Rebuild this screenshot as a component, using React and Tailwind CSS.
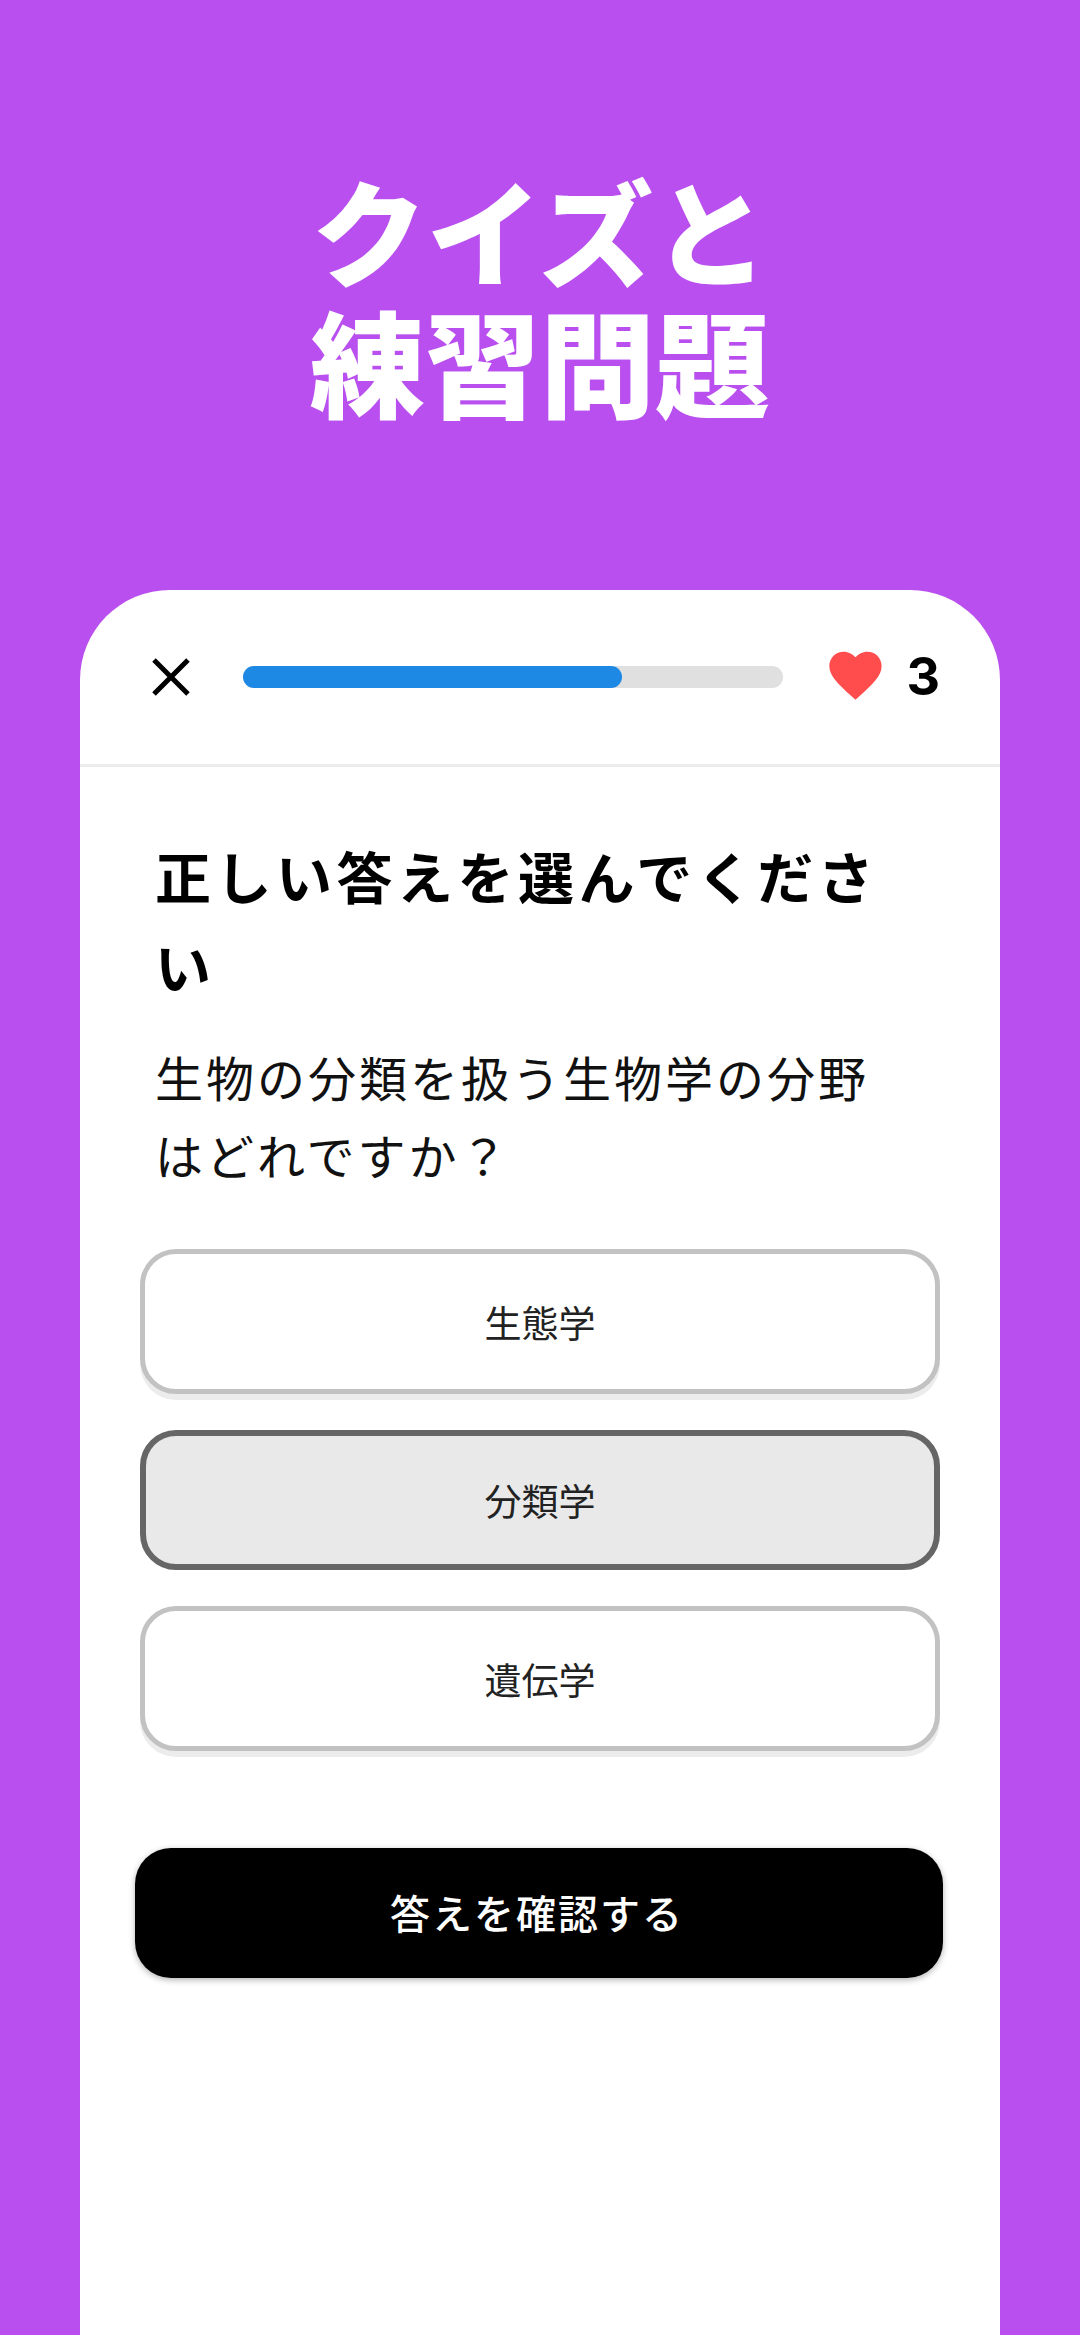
const jp = { fontFamily: '"Noto Sans CJK JP", "Noto Sans", sans-serif' };

function Option({ label, selected }) {
  return (
    <div
      className={
        selected
          ? "flex h-[140px] items-center justify-center rounded-[36px] border-[6px] border-[#666666] bg-[#e9e9e9] pt-[2px] text-[37px] text-[#222222]"
          : "flex h-[145px] items-center justify-center rounded-[36px] border-[5px] border-[#c2c2c2] bg-white pt-[2px] text-[37px] text-[#222222] shadow-[0_6px_0_#ececec]"
      }
    >
      {label}
    </div>
  );
}

export default function App() {
  return (
    <div style={jp} className="flex h-[2335px] w-[1080px] flex-col items-center overflow-hidden bg-[#b84fee]">
      <h1 className="mt-[163px] text-center text-[115px] font-black leading-[131px] text-white">
        クイズと
        <br />
        練習問題
      </h1>
      <div className="mt-[165px] flex w-[920px] flex-1 flex-col rounded-t-[90px] bg-white">
        <div className="flex h-[177px] items-center border-b-[3px] border-[#ececec] pl-[70px] pr-[60px]">
          <svg width="42" height="42" viewBox="0 0 42 42" fill="none" stroke="#000" strokeWidth="5">
            <path d="M4 4 L38 38 M38 4 L4 38" />
          </svg>
          <div className="ml-[51px] h-[22px] w-[541px] rounded-full bg-[#e0e0e0]">
            <div className="h-full w-[379px] rounded-full bg-[#1e88e5]" />
          </div>
          <svg className="ml-[45px] mb-[2px]" width="55" height="50" viewBox="0 0 24 22" fill="#ff4d4d">
            <path d="M12 21.5 L10.3 19.9 C4.4 14.6 0.5 11 0.5 6.6 C0.5 3 3.3 0.3 6.8 0.3 C8.8 0.3 10.8 1.3 12 2.8 C13.2 1.3 15.2 0.3 17.2 0.3 C20.7 0.3 23.5 3 23.5 6.6 C23.5 11 19.6 14.6 13.7 19.9 Z" />
          </svg>
          <span className="ml-[23px] text-[52px] font-bold leading-none text-black" style={{ fontFamily: '"Inter", sans-serif' }}>3</span>
        </div>
        <div className="pl-[75px] pr-[90px] pt-[63px]">
          <h2 className="text-[56px] font-bold leading-[90px] tracking-[4.5px] text-black">正しい答えを選んでください</h2>
          <p className="mt-[27px] text-[48px] leading-[78px] tracking-[3px] text-[#111111]">生物の分類を扱う生物学の分野はどれですか？</p>
        </div>
        <div className="mx-[60px] mt-[56px] flex flex-col gap-[36px]">
          <Option label="生態学" />
          <Option label="分類学" selected />
          <Option label="遺伝学" />
        </div>
        <div className="ml-[55px] mr-[57px] mt-[97px] flex h-[130px] items-center justify-center rounded-[36px] bg-black pb-[2px] pr-[4px] text-[40px] font-medium tracking-[2px] text-white shadow-[0_2px_6px_rgba(0,0,0,0.3)]">
          答えを確認する
        </div>
      </div>
    </div>
  );
}
